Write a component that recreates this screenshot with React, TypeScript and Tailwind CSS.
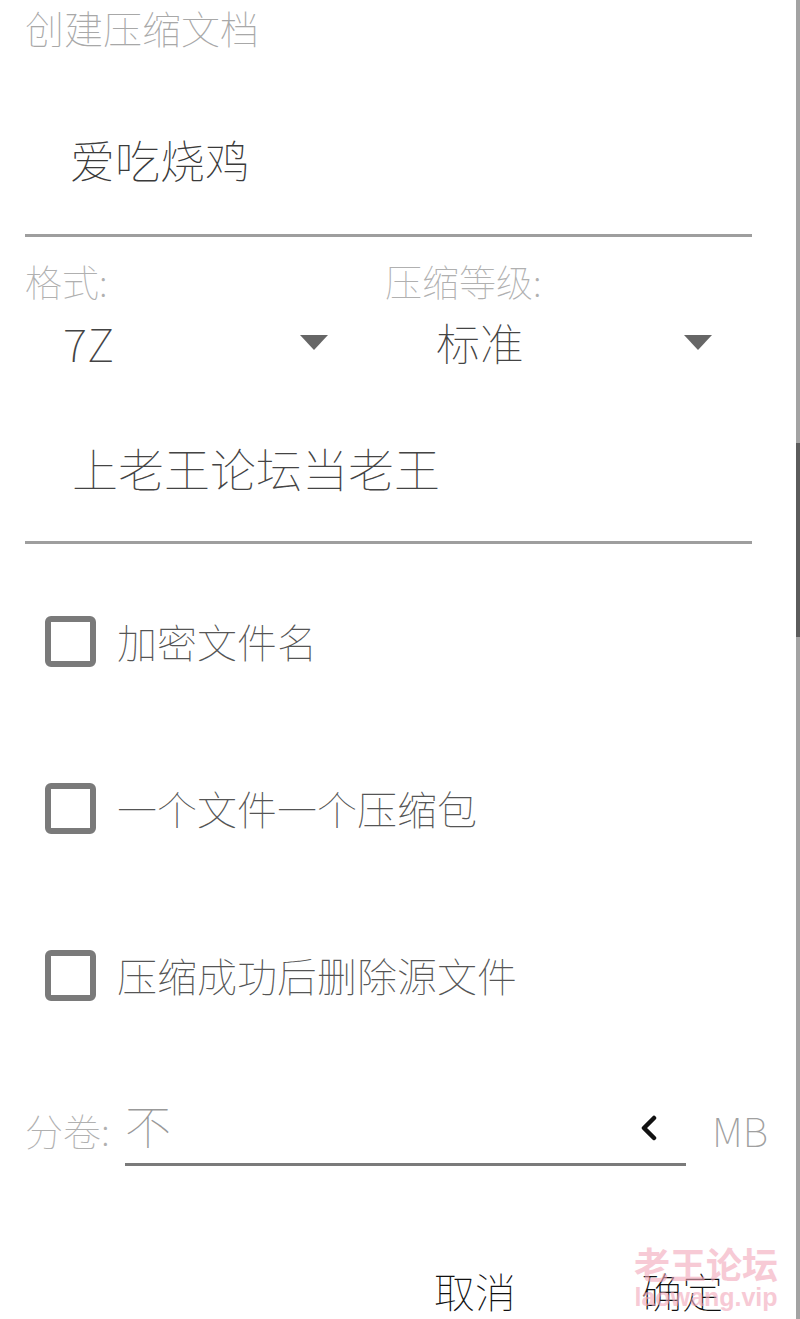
const cjk = { fontFamily: '"Noto Sans CJK SC", "Noto Sans", sans-serif' };

const options = ["加密文件名", "一个文件一个压缩包", "压缩成功后删除源文件"];

function Caret() {
  return (
    <svg width="28" height="15" viewBox="0 0 28 15" className="shrink-0">
      <polygon points="0,0 28,0 14,15" fill="#666666" />
    </svg>
  );
}

function Checkbox({ label }: { label: string }) {
  return (
    <div className="flex h-[51px] items-center pl-[45px]">
      <span className="h-[51px] w-[51px] shrink-0 rounded-[6px] border-[6px] border-[#7a7a7a]" />
      <span className="ml-[21px] text-[40px] leading-[51px] font-thin text-[#555555]">{label}</span>
    </div>
  );
}

export default function App() {
  return (
    <div className="relative h-[1319px] w-[800px] overflow-hidden bg-white" style={cjk}>
      {/* title */}
      <div className="h-[56px] pt-[2px] pl-[25px] text-[39px] leading-[50px] font-thin text-[#a8a8a8]">创建压缩文档</div>

      {/* archive name */}
      <div className="mx-[25px] h-[181px] w-[727px] border-b-[3px] border-[#9e9e9e] pt-[74px] pl-[45px] text-[45px] leading-[60px] font-thin text-[#3a3a3a]">
        爱吃烧鸡
      </div>

      {/* format / level */}
      <div className="ml-[25px] grid w-[727px] grid-cols-[360px_367px]">
        <div>
          <p className="mt-[24px] text-[37px] leading-[40px] font-thin text-[#b0b0b0]">格式:</p>
          <div className="mt-[16px] flex h-[50px] items-center">
            <span className="ml-[38px] text-[46px] leading-[50px] font-thin text-[#444444]">7Z</span>
            <span className="mr-[57px] ml-auto"><Caret /></span>
          </div>
        </div>
        <div>
          <p className="mt-[24px] text-[37px] leading-[40px] font-thin text-[#b0b0b0]">压缩等级:</p>
          <div className="mt-[16px] flex h-[50px] items-center">
            <span className="ml-[51px] text-[44px] leading-[50px] font-thin text-[#444444]">标准</span>
            <span className="mr-[40px] ml-auto"><Caret /></span>
          </div>
        </div>
      </div>

      {/* password */}
      <div className="mx-[25px] h-[177px] w-[727px] border-b-[3px] border-[#9e9e9e] pt-[70px] pl-[47px] text-[46px] leading-[60px] font-thin text-[#444444]">
        上老王论坛当老王
      </div>

      {/* options */}
      <div className="mt-[72px] flex flex-col gap-[116px]">
        {options.map((o) => (
          <Checkbox key={o} label={o} />
        ))}
      </div>

      {/* split volume */}
      <div className="mt-[104px] flex h-[61px] items-start pl-[25px]">
        <span className="w-[100px] shrink-0 text-[38px] leading-[50px] font-thin text-[#b0b0b0]">分卷:</span>
        <div className="flex h-[61px] w-[561px] items-start border-b-[3px] border-[#7a7a7a]">
          <span className="-mt-[6px] text-[46px] leading-[50px] font-thin text-[#999999]">不</span>
          <svg width="20" height="26" viewBox="0 0 20 26" className="mt-[10px] mr-[27px] ml-auto">
            <polyline points="15,3 5,13 15,23" fill="none" stroke="#111111" strokeWidth="4.5" strokeLinecap="round" strokeLinejoin="round" />
          </svg>
        </div>
        <span className="ml-[26px] text-[40px] leading-[50px] font-thin text-[#a0a0a0]">MB</span>
      </div>

      {/* buttons */}
      <div className="mt-[99px] flex h-[50px] gap-[125px] pl-[434px] text-[41px] leading-[50px] font-thin text-[#111111]">
        <span>取消</span>
        <span>确定</span>
      </div>

      {/* watermark */}
      <div className="pointer-events-none absolute top-[1243px] left-[634px] flex flex-col items-center text-[#f2a7ba] opacity-60">
        <span className="text-[36px] leading-[40px] font-bold">老王论坛</span>
        <span className="text-[25px] leading-[28px] font-bold" style={{ fontFamily: '"Liberation Sans", Arial, sans-serif' }}>
          laowang.vip
        </span>
      </div>

      {/* scrollbar */}
      <div className="absolute top-0 right-0 h-full w-[4px] bg-[#a3a3a3]">
        <div className="mt-[443px] h-[194px] w-full bg-[#5c5c5c]" />
      </div>
    </div>
  );
}
